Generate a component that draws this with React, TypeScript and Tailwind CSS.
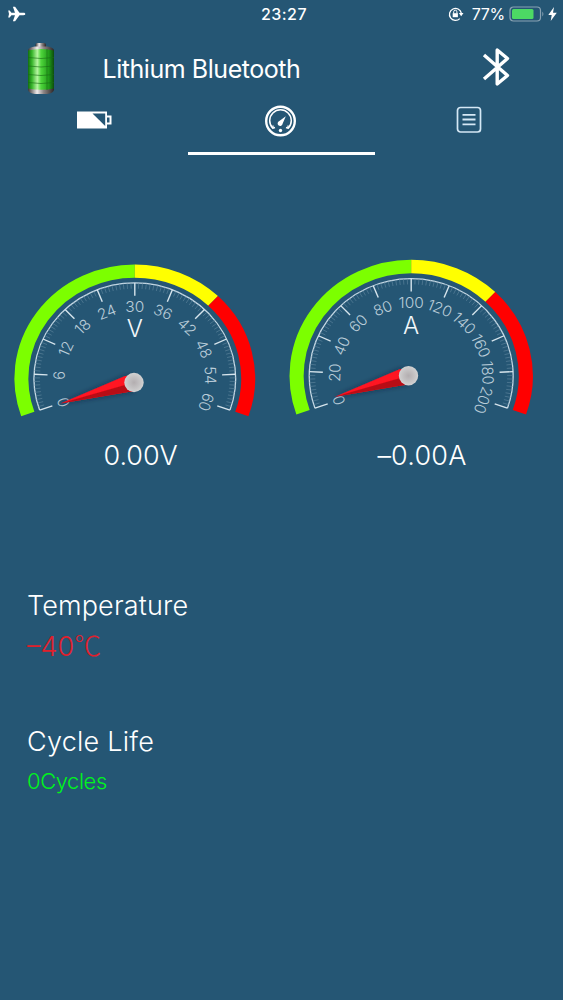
import React from "react";

interface GaugeProps {
  unit: string;
  max: number;
  width: number;
  height: number;
  cx: number;
  cy: number;
  radius: number;
  squash: number;
  hub: { x: number; y: number };
}

const OVERHANG = 19.3;
const STEP = (90 + OVERHANG) / 5;

// angle in degrees of a scale position between 0 and 10
const angleAt = (position: number) => 180 + OVERHANG - position * STEP;

const polar = (radius: number, degrees: number) => {
  const rad = (degrees * Math.PI) / 180;
  return { x: radius * Math.cos(rad), y: -radius * Math.sin(rad) };
};

const arc = (radius: number, from: number, to: number) => {
  const a = polar(radius, angleAt(from));
  const b = polar(radius, angleAt(to));
  const large = (to - from) * STEP > 180 ? 1 : 0;
  return `M${a.x} ${a.y}A${radius} ${radius} 0 ${large} 1 ${b.x} ${b.y}`;
};

function Gauge({ unit, max, width, height, cx, cy, radius, squash, hub }: GaugeProps) {
  const scale = radius * 0.837;
  const band = radius * 0.941;
  const ticks = Array.from({ length: 101 }, (_, i) => i);
  const labels = Array.from({ length: 11 }, (_, i) => i);

  return (
    <svg width={width} height={height} viewBox={`0 0 ${width} ${height}`} className="block">
      <defs>
        <radialGradient id={`hub-${unit}`}>
          <stop offset="0" stopColor="#b3aeb0" />
          <stop offset="0.6" stopColor="#c4c2c3" />
          <stop offset="1" stopColor="#d2d2d2" />
        </radialGradient>
        <filter id={`shadow-${unit}`} x="-20%" y="-60%" width="140%" height="220%">
          <feDropShadow dx="0" dy="0" stdDeviation="2.5" floodColor="#0b2233" floodOpacity="0.6" />
        </filter>
      </defs>
      <g transform={`translate(${cx} ${cy}) scale(1 ${squash})`} fill="none">
        <path d={arc(band, 0, 5)} stroke="#7cff00" strokeWidth={radius * 0.116} />
        <path d={arc(band, 5, 7)} stroke="#ffff00" strokeWidth={radius * 0.116} />
        <path d={arc(band, 7, 10)} stroke="#ff0000" strokeWidth={radius * 0.116} />
        <path d={arc(scale, 0, 10)} stroke="#c6d9e5" strokeWidth="1.3" />
        {ticks.map((i) => {
          const major = i % 10 === 0;
          const a = polar(scale, angleAt(i / 10));
          const b = polar(scale - (major ? 13.5 : 6), angleAt(i / 10));
          return (
            <line
              key={i}
              x1={a.x}
              y1={a.y}
              x2={b.x}
              y2={b.y}
              stroke={major ? "#d6e4ec" : "#6489a1"}
              strokeWidth={major ? 1.4 : 0.6}
            />
          );
        })}
        {labels.map((i) => {
          const p = polar(radius * 0.625, angleAt(i));
          return (
            <text
              key={i}
              transform={`translate(${p.x} ${p.y}) rotate(${90 - angleAt(i)})`}
              y="5.2"
              textAnchor="middle"
              fill="#b9ccd8"
              className="font-['Inter',sans-serif] text-[15.5px] font-light"
            >
              {(max / 10) * i}
            </text>
          );
        })}
      </g>
      <text
        x={cx}
        y={cy - 42}
        textAnchor="middle"
        fill="#f2f7fa"
        className="font-['Inter',sans-serif] text-[24px] font-light"
      >
        {unit}
      </text>
      <g transform={`translate(${hub.x} ${hub.y})`}>
        <g filter={`url(#shadow-${unit})`}>
          <path d="M-73.5 21L-9 -6.5L0 -7L0 9L-6 9.5Z" fill="#ff1220" />
          <path d="M-73.5 21L0 0L0 9L-6 9.5Z" fill="#b70812" />
        </g>
        <circle r="9.7" fill={`url(#hub-${unit})`} />
      </g>
    </svg>
  );
}

function BatteryLogo() {
  return (
    <svg width="28" height="52" viewBox="0 0 28 52" className="block">
      <defs>
        <linearGradient id="cell">
          <stop offset="0" stopColor="#126e10" />
          <stop offset="0.15" stopColor="#36b52a" />
          <stop offset="0.36" stopColor="#b5f5a0" />
          <stop offset="0.5" stopColor="#4fd63c" />
          <stop offset="0.8" stopColor="#209b18" />
          <stop offset="1" stopColor="#0d4d0c" />
        </linearGradient>
        <linearGradient id="metal">
          <stop offset="0" stopColor="#3b3434" />
          <stop offset="0.35" stopColor="#f1ecec" />
          <stop offset="0.6" stopColor="#8d8585" />
          <stop offset="1" stopColor="#2c2525" />
        </linearGradient>
      </defs>
      <rect x="8.5" y="1" width="10.5" height="6" rx="2" fill="url(#metal)" />
      <path d="M1 8Q2 5 8 4.500H20Q26 5 27 8V48Q26 51.500 20 52H8Q2 51.500 1 48Z" fill="url(#metal)" />
      <path d="M1 8.500Q14 5.500 27 8.500V46.500Q14 49 1 46.500Z" fill="url(#cell)" />
      <path
        d="M1 15.500Q14 17.500 27 15.500M1 24Q14 26 27 24M1 32.500Q14 34.500 27 32.500M1 40.500Q14 42.500 27 40.500M20 7V48"
        fill="none"
        stroke="#176b14"
        strokeWidth="0.8"
        opacity="0.75"
      />
    </svg>
  );
}

function StatusBar() {
  return (
    <div className="grid h-7 grid-cols-3 items-center pl-2 pr-1.5 text-white">
      <svg width="18" height="16" viewBox="0 0 18 16" fill="currentColor">
        <path d="M17.3 8C17.3 7.200 16.500 6.800 15.500 6.800H11.500L7.100 0.700H4.900L7 6.800H3.400L1.700 4.500H0.200L1 8L0.200 11.500H1.700L3.400 9.200H7L4.900 15.300H7.100L11.500 9.200H15.500C16.500 9.200 17.300 8.800 17.300 8Z" />
      </svg>
      <span className="pl-[3px] text-center text-[16px] font-medium tracking-[0.5px]">23:27</span>
      <div className="flex items-center justify-end">
        <svg width="16" height="16" viewBox="0 0 16 16" fill="none" stroke="currentColor" strokeWidth="1.3">
          <path d="M11.800 12.600A6 6 0 1 1 13.300 7" />
          <path d="M10.800 7H15.500L13.200 10.200Z" fill="currentColor" stroke="none" />
          <rect x="4.700" y="7.200" width="5.200" height="4" fill="currentColor" stroke="none" />
          <path d="M5.700 7.500V5.800A1.600 1.600 0 0 1 8.900 5.800V7.500" strokeWidth="1" />
        </svg>
        <span className="ml-2 text-[16px] font-normal tracking-[-0.3px]">77%</span>
        <svg width="36" height="16" viewBox="0 0 36 16" className="ml-1">
          <rect x="1" y="1" width="30.5" height="14" rx="3.5" fill="none" stroke="#89a2b3" strokeWidth="1.2" />
          <rect x="3" y="3" width="21.5" height="10" rx="1.5" fill="#4cd964" />
          <path d="M33.300 5.500Q35.500 8 33.300 10.500Z" fill="#89a2b3" />
        </svg>
        <svg width="9" height="14" viewBox="0 0 9 14" fill="currentColor" className="ml-[3px]">
          <path d="M6 0L0.300 8H3.700L2.700 14L8.800 5.700H5Z" />
        </svg>
      </div>
    </div>
  );
}

function Header() {
  return (
    <header className="flex h-[72px] items-start pt-[14px] text-white">
      <div className="ml-[27px]">
        <BatteryLogo />
      </div>
      <h1 className="ml-[47.5px] mt-[11px] flex-1 text-[25px] font-normal leading-[32px] tracking-[-0.45px]">
        Lithium Bluetooth
      </h1>
      <svg
        width="28"
        height="42"
        viewBox="0 0 28 42"
        fill="none"
        stroke="currentColor"
        strokeWidth="3.4"
        strokeLinejoin="round"
        className="mr-[53px] mt-1"
      >
        <path d="M2 9L25.500 29.500L15.200 38V4L25.500 12.500L2 33" />
      </svg>
    </header>
  );
}

function Tabs() {
  return (
    <nav className="grid h-[55px] grid-cols-3 text-white">
      <button className="flex justify-center pt-[11px]">
        <svg width="36" height="18" viewBox="0 0 36 18" className="block">
          <path d="M1 0.500H31V17.500H1Z" fill="#fff" />
          <path d="M16.500 2.500H29.200V15Z" fill="#255674" />
          <path d="M31 5.500H34.500V12.500H31" fill="none" stroke="#fff" strokeWidth="2" />
        </svg>
      </button>
      <button className="flex justify-center border-b-[3px] border-white pt-[5px]">
        <svg width="32" height="32" viewBox="0 0 32 32" fill="none" stroke="currentColor" className="block">
          <circle cx="15.5" cy="16" r="14.3" strokeWidth="2.4" />
          <path d="M10 22.500L7.800 23.200A10.800 10.800 0 1 1 23.200 23.200L21 22.500" strokeWidth="1.5" />
          <path d="M8 23.300V20.500M23 23.300V20.500" strokeWidth="1.3" />
          <path d="M20.800 11.200L17.600 18.800A2.500 2.500 0 1 1 14 16.200Z" fill="currentColor" stroke="none" />
          <circle cx="15.5" cy="25.5" r="1.7" fill="currentColor" stroke="none" />
        </svg>
      </button>
      <button className="flex justify-center pt-[6px]">
        <svg width="26" height="28" viewBox="0 0 26 28" fill="none" stroke="#d5e8f5" className="block">
          <rect x="1.5" y="1.5" width="23" height="24.5" rx="3" strokeWidth="1.7" />
          <path d="M6.500 8.800H19.500M6.500 13.500H19.500M6.500 18.300H19.500" strokeWidth="1.8" />
        </svg>
      </button>
    </nav>
  );
}

export default function App() {
  return (
    <div className="flex h-[1000px] w-[563px] flex-col bg-[#255674] font-['Inter',sans-serif]">
      <StatusBar />
      <Header />
      <Tabs />
      <section className="mt-[95px] flex">
        <Gauge
          unit="V"
          max={60}
          width={282}
          height={180}
          cx={134.8}
          cy={128.5}
          radius={120.5}
          squash={0.947}
          hub={{ x: 134, y: 132.5 }}
        />
        <Gauge
          unit="A"
          max={200}
          width={281}
          height={180}
          cx={129.2}
          cy={126}
          radius={121.8}
          squash={0.955}
          hub={{ x: 126.5, y: 125.7 }}
        />
      </section>
      <section className="mt-[9px] flex text-[27px] font-light leading-[34px] text-white">
        <p className="w-[281px] text-center">0.00V</p>
        <p className="w-[282px] text-center tracking-[0.2px]">–0.00A</p>
      </section>
      <section className="mt-[116px] pl-[27px] font-light">
        <h2 className="text-[27px] leading-[34px] tracking-[0.15px] text-white">Temperature</h2>
        <p className="mt-[5px] h-[36px] text-[27px] leading-[34px] text-[#e0202c]">
          –40<span className="font-['Noto_Sans_CJK_SC',sans-serif]">℃</span>
        </p>
      </section>
      <section className="mt-[61px] pl-[27px] font-light">
        <h2 className="text-[27px] leading-[34px] tracking-[0.25px] text-white">Cycle Life</h2>
        <p className="mt-[8px] text-[22px] leading-[28px] tracking-[-0.45px] text-[#00f51c]">0Cycles</p>
      </section>
    </div>
  );
}
